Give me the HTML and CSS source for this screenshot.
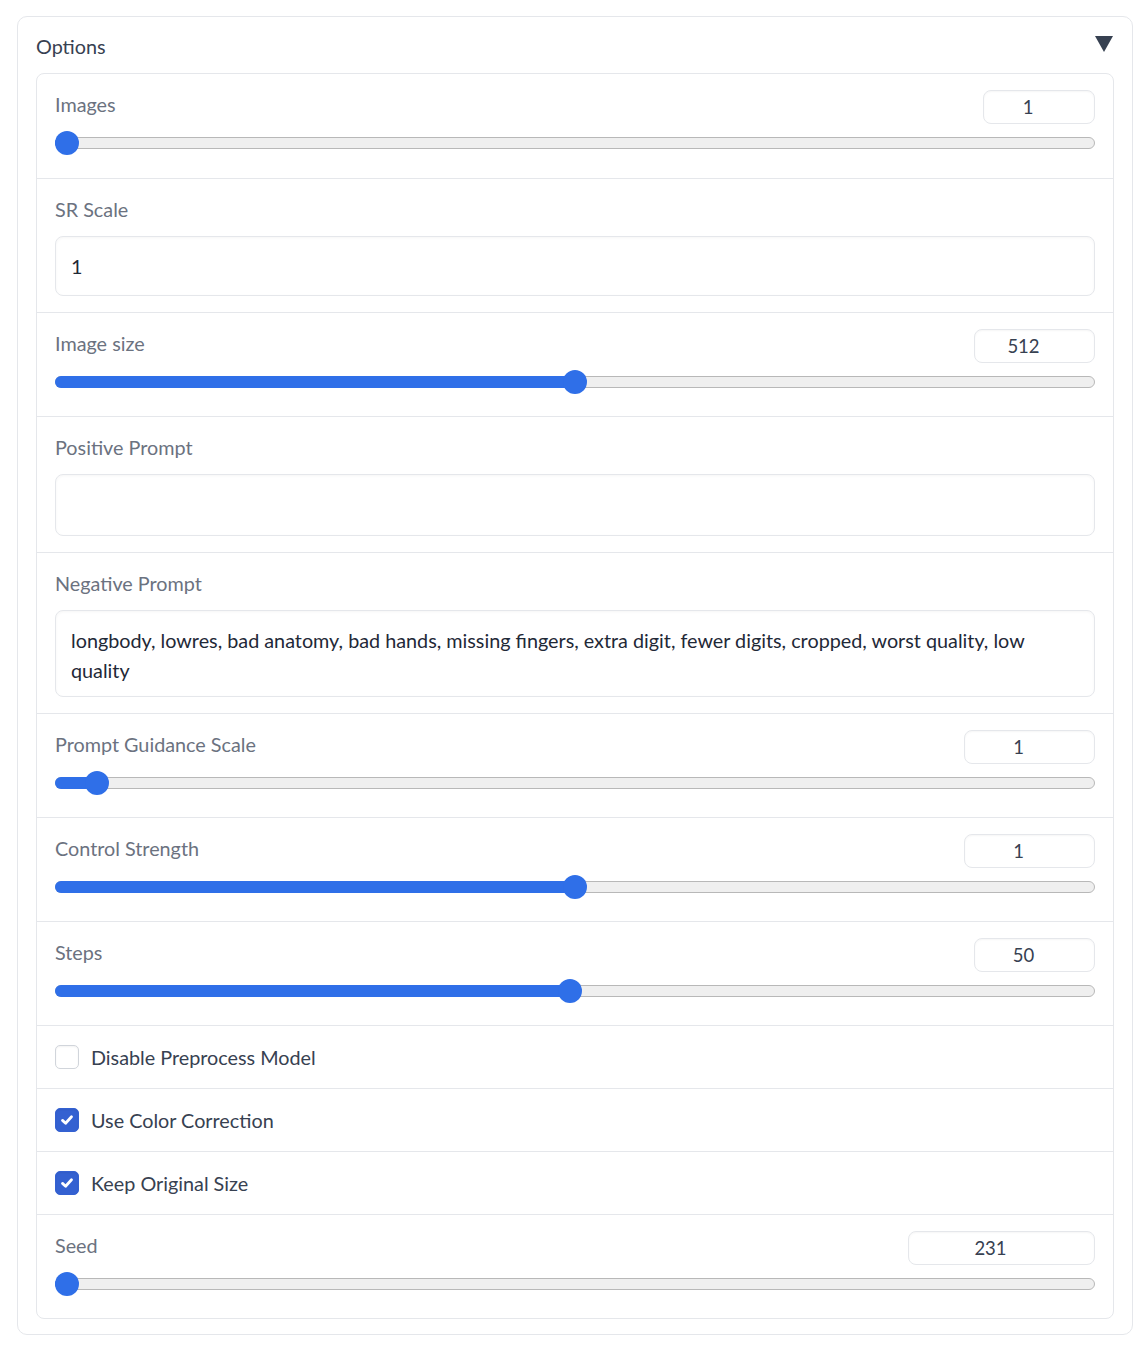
FILE: index.html
```html
<!DOCTYPE html>
<html lang="en">
<head>
    <meta charset="UTF-8">
    <meta name="viewport" content="width=device-width, initial-scale=1.0">
    <title>Options</title>
    <link rel="stylesheet" href="styles.css">
</head>
<body>
    <div class="panel">
        <div class="panel-head">
            <span class="panel-title">Options</span>
            <svg class="caret" width="18" height="16" viewBox="0 0 18 16"><polygon points="0,0 18,0 9,16" fill="#374151"/></svg>
        </div>

        <div class="block">
            <div class="row slider-row">
                <div class="slider-head">
                    <span class="label">Images</span>
                    <div class="num num-sm">1</div>
                </div>
                <div class="track" style="--v: 0"><div class="fill"></div><div class="thumb"></div></div>
            </div>

            <div class="row">
                <div class="label label-top">SR Scale</div>
                <div class="field field-input">1</div>
            </div>

            <div class="row slider-row">
                <div class="slider-head">
                    <span class="label">Image size</span>
                    <div class="num num-md">512</div>
                </div>
                <div class="track" style="--v: 0.5"><div class="fill"></div><div class="thumb"></div></div>
            </div>

            <div class="row">
                <div class="label label-top">Positive Prompt</div>
                <div class="field field-empty"></div>
            </div>

            <div class="row">
                <div class="label label-top">Negative Prompt</div>
                <div class="field field-text">longbody, lowres, bad anatomy, bad hands, missing fingers, extra digit, fewer digits, cropped, worst quality, low quality</div>
            </div>

            <div class="row slider-row">
                <div class="slider-head">
                    <span class="label">Prompt Guidance Scale</span>
                    <div class="num num-lg">1</div>
                </div>
                <div class="track" style="--v: 0.03"><div class="fill"></div><div class="thumb"></div></div>
            </div>

            <div class="row slider-row">
                <div class="slider-head">
                    <span class="label">Control Strength</span>
                    <div class="num num-lg">1</div>
                </div>
                <div class="track" style="--v: 0.5"><div class="fill"></div><div class="thumb"></div></div>
            </div>

            <div class="row slider-row">
                <div class="slider-head">
                    <span class="label">Steps</span>
                    <div class="num num-md">50</div>
                </div>
                <div class="track" style="--v: 0.495"><div class="fill"></div><div class="thumb"></div></div>
            </div>

            <label class="row check-row">
                <span class="box"></span>
                <span class="check-label">Disable Preprocess Model</span>
            </label>

            <label class="row check-row">
                <span class="box checked">
                    <svg width="16" height="16" viewBox="0 0 16 16"><path d="M3.5 8.4 L6.6 11.2 L12.5 4.8" fill="none" stroke="#fff" stroke-width="2.8" stroke-linecap="round" stroke-linejoin="round"/></svg>
                </span>
                <span class="check-label">Use Color Correction</span>
            </label>

            <label class="row check-row">
                <span class="box checked">
                    <svg width="16" height="16" viewBox="0 0 16 16"><path d="M3.5 8.4 L6.6 11.2 L12.5 4.8" fill="none" stroke="#fff" stroke-width="2.8" stroke-linecap="round" stroke-linejoin="round"/></svg>
                </span>
                <span class="check-label">Keep Original Size</span>
            </label>

            <div class="row slider-row">
                <div class="slider-head">
                    <span class="label">Seed</span>
                    <div class="num num-xl">231</div>
                </div>
                <div class="track" style="--v: 0"><div class="fill"></div><div class="thumb"></div></div>
            </div>
        </div>
    </div>
</body>
</html>
```

FILE: styles.css
```css
body {
    margin: 0;
    background: #fff;
    font-family: Lato, "Liberation Sans", sans-serif;
    color: #374151;
}
.panel {
    width: 1078px;
    margin: 16px 0 0 17px;
    padding: 0 18px 15px;
    border: 1px solid #e5e7eb;
    border-radius: 10px;
}
.panel-head {
    height: 56px;
    display: flex;
    align-items: center;
    justify-content: space-between;
    padding-top: 2px;
    box-sizing: border-box;
}
.panel-title {
    font-size: 19.8px;
    color: #374151;
}
.caret {
    margin-right: 1px;
    margin-top: -4px;
}
.block {
    border: 1px solid #e5e7eb;
    border-radius: 8px;
}
.row {
    padding: 16px 18px;
    border-top: 1px solid #e5e7eb;
}
.row:first-child {
    border-top: none;
}
.label {
    font-size: 19.8px;
    color: #6b7280;
    line-height: 28px;
}
.label-top {
    display: block;
    margin-bottom: 13px;
}

/* sliders */
.slider-row {
    padding-bottom: 22px;
}
.slider-row:first-child {
    padding-bottom: 23px;
}
.slider-head {
    display: flex;
    justify-content: space-between;
    align-items: flex-start;
    height: 34px;
    margin-bottom: 7px;
}
.num {
    height: 34px;
    box-sizing: border-box;
    padding-right: 22px;
    border: 1px solid #e5e7eb;
    border-radius: 8px;
    box-shadow: inset 0 1px 2px rgba(0,0,0,0.04);
    font-size: 18.5px;
    line-height: 32px;
    text-align: center;
    color: #374151;
}
.num-sm { width: 112px; }
.num-md { width: 121px; }
.num-lg { width: 131px; }
.num-xl { width: 187px; }
.track {
    position: relative;
    height: 24px;
}
.track::before {
    content: "";
    position: absolute;
    left: 0;
    right: 0;
    top: 6px;
    height: 12px;
    box-sizing: border-box;
    background: #efefef;
    border: 1px solid #b8b8b8;
    border-radius: 6px;
}
.fill {
    position: absolute;
    left: 0;
    top: 6px;
    height: 12px;
    width: calc(12px + (100% - 24px) * var(--v));
    background: #2f6fe8;
    border-radius: 6px;
}
.thumb {
    position: absolute;
    top: 0;
    left: calc((100% - 24px) * var(--v));
    width: 24px;
    height: 24px;
    border-radius: 50%;
    background: #2f6fe8;
}

/* text fields */
.field {
    border: 1px solid #e5e7eb;
    border-radius: 8px;
    box-shadow: inset 0 1px 3px rgba(0,0,0,0.04);
    font-size: 19.8px;
    color: #1f2937;
    box-sizing: border-box;
}
.field-input {
    height: 60px;
    line-height: 58px;
    padding: 0 15px;
}
.field-empty {
    height: 62px;
}
.field-text {
    line-height: 30px;
    padding: 14px 15px 11px;
}

/* checkboxes */
.check-row {
    display: flex;
    align-items: center;
    padding-top: 19px;
    padding-bottom: 19px;
}
.box {
    width: 24px;
    height: 24px;
    box-sizing: border-box;
    border: 1px solid #d1d5db;
    border-radius: 5px;
    background: #fff;
    box-shadow: inset 0 1px 2px rgba(0,0,0,0.05);
    display: flex;
    align-items: center;
    justify-content: center;
    margin-right: 12px;
}
.box.checked {
    background: #3461d1;
    border-color: #3461d1;
}
.check-label {
    font-size: 19.8px;
    line-height: 24px;
    color: #374151;
}
```
